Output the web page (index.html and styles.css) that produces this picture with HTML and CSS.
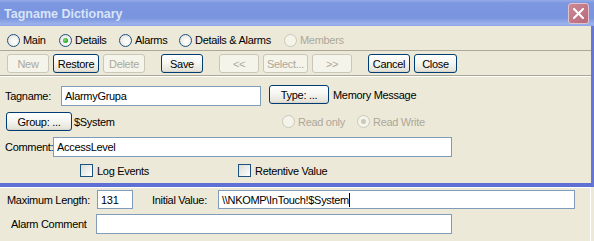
FILE: index.html
```html
<!DOCTYPE html>
<html lang="en">
<head>
    <meta charset="UTF-8">
    <title>Tagname Dictionary</title>
    <link rel="stylesheet" href="styles.css">
</head>
<body>
    <div class="window">
        <div class="titlebar">
            <span class="title">Tagname Dictionary</span>
            <span class="close-btn">
                <svg width="11" height="11" viewBox="0 0 11 11">
                    <path d="M1 1 L10 10 M10 1 L1 10" stroke="#fff" stroke-width="2" stroke-linecap="square"/>
                </svg>
            </span>
        </div>

        <div class="dialog">
            <div class="view-row">
                <label class="radio"><span class="dot"></span>Main</label>
                <label class="radio"><span class="dot checked"></span>Details</label>
                <label class="radio"><span class="dot"></span>Alarms</label>
                <label class="radio"><span class="dot"></span>Details &amp; Alarms</label>
                <label class="radio disabled"><span class="dot"></span>Members</label>
            </div>

            <div class="toolbar">
                <div class="btn-group">
                    <button class="btn w42" disabled>New</button>
                    <button class="btn w46">Restore</button>
                    <button class="btn w42" disabled>Delete</button>
                </div>
                <div class="btn-group">
                    <button class="btn w42">Save</button>
                </div>
                <div class="btn-group">
                    <button class="btn w40" disabled>&lt;&lt;</button>
                    <button class="btn w45" disabled>Select...</button>
                    <button class="btn w40" disabled>&gt;&gt;</button>
                </div>
                <div class="btn-group">
                    <button class="btn w42">Cancel</button>
                    <button class="btn w43">Close</button>
                </div>
            </div>

            <div class="fields">
                <div class="row row-tag">
                    <span class="lbl lbl-tag">Tagname:</span>
                    <input class="field field-tag" type="text" value="AlarmyGrupa">
                    <button class="btn btn-type">Type: ...</button>
                    <span class="type-text">Memory Message</span>
                </div>

                <div class="row row-group">
                    <button class="btn btn-group-pick">Group: ...</button>
                    <span class="group-text">$System</span>
                    <label class="radio disabled access-ro"><span class="dot"></span>Read only</label>
                    <label class="radio disabled"><span class="dot checked"></span>Read Write</label>
                </div>

                <div class="row row-comment">
                    <span class="lbl lbl-comment">Comment:</span>
                    <input class="field field-comment" type="text" value="AccessLevel">
                </div>

                <div class="row row-checks">
                    <label class="check check-log"><span class="box"></span>Log Events</label>
                    <label class="check"><span class="box"></span>Retentive Value</label>
                </div>
            </div>
        </div>

        <div class="lower">
            <div class="row row-max">
                <span class="lbl lbl-max">Maximum Length:</span>
                <input class="field field-max" type="text" value="131">
                <span class="lbl lbl-init">Initial Value:</span>
                <div class="field field-init">\\NKOMP\InTouch!$System<span class="caret"></span></div>
            </div>
            <div class="row row-alarm">
                <span class="lbl lbl-alarm">Alarm Comment</span>
                <input class="field field-alarm" type="text" value="">
            </div>
        </div>
    </div>
</body>
</html>
```

FILE: styles.css
```css
body {
    margin: 0;
    background-color: #ECE9D8;
    font-family: "Liberation Sans", Arial, sans-serif;
    font-size: 11px;
    letter-spacing: -0.3px;
    color: #000;
}
.window {
    width: 594px;
}

/* title bar (inactive XP style) */
.titlebar {
    height: 26px;
    display: flex;
    align-items: center;
    justify-content: space-between;
    padding: 0 5px 0 4px;
    box-sizing: border-box;
    background: linear-gradient(to bottom, #97ACE8 0, #7C97E0 3px, #7A95DF 18px, #9CB1EC 24px, #8FA6E8 26px);
}
.title {
    font-weight: bold;
    font-size: 12.5px;
    letter-spacing: 0;
    color: #D8E4F8;
    padding-top: 1px;
}
.close-btn {
    width: 21px;
    height: 21px;
    box-sizing: border-box;
    border: 1px solid #E3C3CB;
    border-radius: 3px;
    background: linear-gradient(135deg, #CB8B97, #B8677A);
    display: flex;
    align-items: center;
    justify-content: center;
}

/* dialog body */
.dialog {
    border-right: 3px solid #6576D8;
    border-bottom: 4px solid #5E70D4;
    padding-bottom: 6px;
}
.view-row {
    display: grid;
    grid-template-columns: 52px 60px 60px 105px auto;
    padding: 4px 0 0 7px;
    height: 20px;
    align-items: center;
}
.radio {
    display: flex;
    align-items: center;
    white-space: nowrap;
}
.dot {
    width: 13px;
    height: 13px;
    box-sizing: border-box;
    border: 1px solid #1C5180;
    border-radius: 50%;
    background: radial-gradient(circle at 60% 60%, #fff 0, #F4F3EE 40%, #DCDCD7 100%);
    margin-right: 3px;
    position: relative;
}
.dot.checked::after {
    content: "";
    position: absolute;
    left: 3px;
    top: 3px;
    width: 5px;
    height: 5px;
    border-radius: 50%;
    background: radial-gradient(circle at 40% 40%, #8FE08A 0, #2DB028 55%, #1E8C1A 100%);
}
.radio.disabled {
    color: #ACA899;
}
.radio.disabled .dot {
    border-color: #CAC8BB;
    background: #F5F4EA;
}
.radio.disabled .dot.checked::after {
    background: #CAC8BB;
}

.toolbar {
    display: flex;
    gap: 16px;
    border-top: 1px solid #ACA899;
    border-bottom: 1px solid #ACA899;
    box-shadow: 0 1px 0 #fff;
    padding: 3px 0 2px 7px;
}
.btn-group {
    display: flex;
    gap: 4px;
}
.btn {
    height: 19px;
    box-sizing: border-box;
    padding: 0;
    font-family: inherit;
    font-size: 11px;
    letter-spacing: -0.3px;
    color: #000;
    border: 1px solid #003C74;
    border-radius: 3px;
    background: linear-gradient(to bottom, #fff 0, #F4F4F0 50%, #E6E4DA 90%, #D6D0C5 100%);
}
.btn:disabled {
    color: #ACA899;
    border-color: #C9C7BA;
    background: #F5F4EA;
}
.w40 { width: 40px; }
.w42 { width: 42px; }
.w43 { width: 43px; }
.w45 { width: 45px; }
.w46 { width: 46px; }

/* form rows */
.fields {
    padding-top: 10px;
}
.row {
    display: flex;
    align-items: center;
}
.field {
    height: 20px;
    box-sizing: border-box;
    border: 1px solid #7F9DB9;
    background: #fff;
    font-family: inherit;
    font-size: 11px;
    letter-spacing: -0.3px;
    padding: 0 0 0 3px;
    margin: 0;
    color: #000;
    outline: none;
}
.row-tag {
    padding-left: 5px;
    height: 20px;
}
.lbl-tag { width: 56px; }
.field-tag { width: 200px; }
.btn-type {
    width: 60px;
    margin: -3px 0 0 8px;
}
.type-text {
    margin-left: 4px;
    margin-top: -3px;
}

.row-group {
    margin-top: 6px;
    padding-left: 6px;
    height: 19px;
}
.btn-group-pick { width: 66px; }
.group-text {
    margin-left: 2px;
    width: 208px;
}
.access-ro { width: 75px; }

.row-comment {
    margin-top: 6px;
    padding-left: 5px;
}
.lbl-comment { width: 48px; white-space: nowrap; }
.field-comment { width: 399px; }

.row-checks {
    margin-top: 7px;
    padding-left: 80px;
    height: 13px;
}
.check {
    display: flex;
    align-items: center;
}
.check-log { width: 158px; }
.box {
    width: 13px;
    height: 13px;
    box-sizing: border-box;
    border: 1px solid #1C5180;
    background: linear-gradient(135deg, #DCDCD7, #fff);
    margin-right: 4px;
}

/* lower panel */
.lower {
    border-top: 1px solid #fff;
    padding-top: 2px;
    height: 52px;
    margin-right: 3px;
    border-right: 1px solid #fff;
}
.row-max {
    padding-left: 7px;
}
.lbl-max { width: 90px; }
.field-max {
    width: 36px;
    height: 19px;
}
.lbl-init {
    margin-left: 19px;
    width: 66px;
}
.field-init {
    width: 357px;
    height: 19px;
    display: flex;
    align-items: center;
    white-space: nowrap;
}
.caret {
    display: inline-block;
    width: 1px;
    height: 14px;
    background: #000;
}
.row-alarm {
    margin-top: 5px;
    padding-left: 11px;
}
.lbl-alarm { width: 85px; }
.field-alarm { width: 356px; }
```
